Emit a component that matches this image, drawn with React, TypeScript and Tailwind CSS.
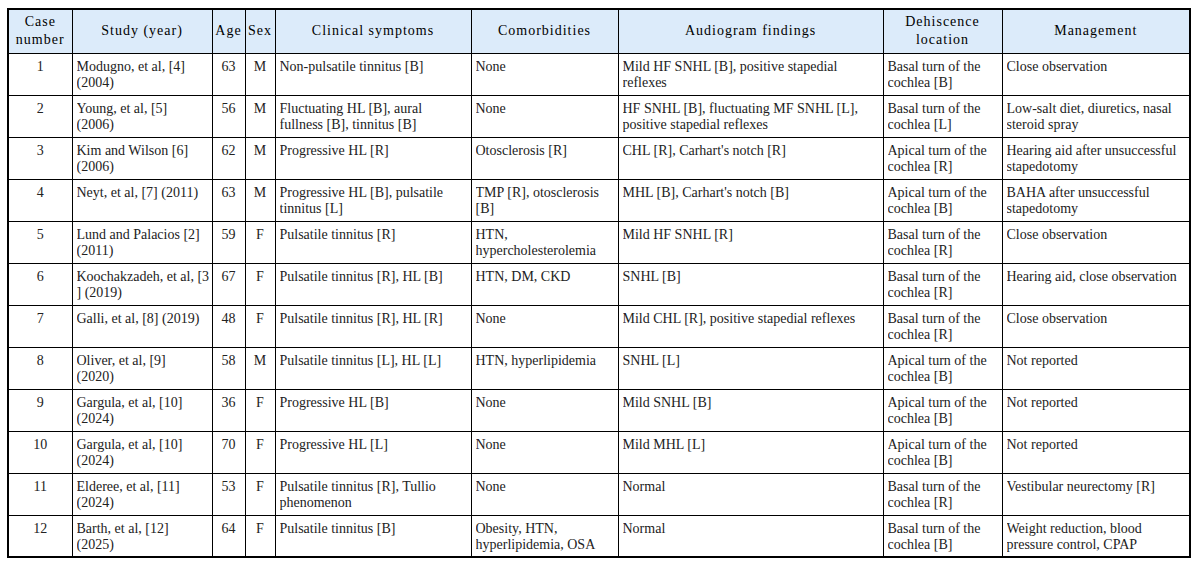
import React from "react";

const headers = [
  "Case\nnumber",
  "Study (year)",
  "Age",
  "Sex",
  "Clinical symptoms",
  "Comorbidities",
  "Audiogram findings",
  "Dehiscence\nlocation",
  "Management",
];

const widths = [64, 140, 33, 30, 196, 147, 265, 119, 188];

const rows: string[][] = [
  ["1", "Modugno, et al, [4]\n(2004)", "63", "M", "Non-pulsatile tinnitus [B]", "None", "Mild HF SNHL [B], positive stapedial\nreflexes", "Basal turn of the\ncochlea [B]", "Close observation"],
  ["2", "Young, et al, [5]\n(2006)", "56", "M", "Fluctuating HL [B], aural\nfullness [B], tinnitus [B]", "None", "HF SNHL [B], fluctuating MF SNHL [L],\npositive stapedial reflexes", "Basal turn of the\ncochlea [L]", "Low-salt diet, diuretics, nasal\nsteroid spray"],
  ["3", "Kim and Wilson [6]\n(2006)", "62", "M", "Progressive HL [R]", "Otosclerosis [R]", "CHL [R], Carhart's notch [R]", "Apical turn of the\ncochlea [R]", "Hearing aid after unsuccessful\nstapedotomy"],
  ["4", "Neyt, et al, [7] (2011)", "63", "M", "Progressive HL [B], pulsatile\ntinnitus [L]", "TMP [R], otosclerosis\n[B]", "MHL [B], Carhart's notch [B]", "Apical turn of the\ncochlea [B]", "BAHA after unsuccessful\nstapedotomy"],
  ["5", "Lund and Palacios [2]\n(2011)", "59", "F", "Pulsatile tinnitus [R]", "HTN,\nhypercholesterolemia", "Mild HF SNHL [R]", "Basal turn of the\ncochlea [R]", "Close observation"],
  ["6", "Koochakzadeh, et al, [3\n] (2019)", "67", "F", "Pulsatile tinnitus [R], HL [B]", "HTN, DM, CKD", "SNHL [B]", "Basal turn of the\ncochlea [R]", "Hearing aid, close observation"],
  ["7", "Galli, et al, [8] (2019)", "48", "F", "Pulsatile tinnitus [R], HL [R]", "None", "Mild CHL [R], positive stapedial reflexes", "Basal turn of the\ncochlea [R]", "Close observation"],
  ["8", "Oliver, et al, [9]\n(2020)", "58", "M", "Pulsatile tinnitus [L], HL [L]", "HTN, hyperlipidemia", "SNHL [L]", "Apical turn of the\ncochlea [B]", "Not reported"],
  ["9", "Gargula, et al, [10]\n(2024)", "36", "F", "Progressive HL [B]", "None", "Mild SNHL [B]", "Apical turn of the\ncochlea [B]", "Not reported"],
  ["10", "Gargula, et al, [10]\n(2024)", "70", "F", "Progressive HL [L]", "None", "Mild MHL [L]", "Apical turn of the\ncochlea [B]", "Not reported"],
  ["11", "Elderee, et al, [11]\n(2024)", "53", "F", "Pulsatile tinnitus [R], Tullio\nphenomenon", "None", "Normal", "Basal turn of the\ncochlea [R]", "Vestibular neurectomy [R]"],
  ["12", "Barth, et al, [12]\n(2025)", "64", "F", "Pulsatile tinnitus [B]", "Obesity, HTN,\nhyperlipidemia, OSA", "Normal", "Basal turn of the\ncochlea [B]", "Weight reduction, blood\npressure control, CPAP"],
];

const centered = new Set([0, 2, 3]);

function Lines({ text }: { text: string }) {
  return (
    <>
      {text.split("\n").map((l, i) => (
        <div key={i} className="whitespace-nowrap overflow-hidden">
          {l}
        </div>
      ))}
    </>
  );
}

export default function App() {
  return (
    <div className="w-[1200px] h-[568px] bg-white pt-[8px] pl-[7px] font-['Liberation_Serif','Times_New_Roman',serif]">
      <table className="table-fixed border-collapse border-2 border-black w-[1184px]">
        <colgroup>
          {widths.map((w, i) => (
            <col key={i} style={{ width: w }} />
          ))}
        </colgroup>
        <thead>
          <tr className="h-[44px] bg-[#dcebfa]">
            {headers.map((h, i) => (
              <th
                key={i}
                className="border border-black p-0 text-center align-middle font-normal text-[14px] leading-[18px] tracking-[1px] text-black"
              >
                <Lines text={h} />
              </th>
            ))}
          </tr>
        </thead>
        <tbody>
          {rows.map((r, ri) => (
            <tr key={ri} className="h-[42px]">
              {r.map((c, ci) => (
                <td
                  key={ci}
                  className={
                    centered.has(ci)
                      ? "border border-black align-top text-center pt-[5px] px-0 text-[14px] leading-[16.5px] text-[#222] overflow-hidden"
                      : "border border-black align-top text-left pt-[5px] pl-[4px] pr-0 text-[14px] leading-[16.5px] text-[#222] overflow-hidden"
                  }
                >
                  <Lines text={c} />
                </td>
              ))}
            </tr>
          ))}
        </tbody>
      </table>
    </div>
  );
}
